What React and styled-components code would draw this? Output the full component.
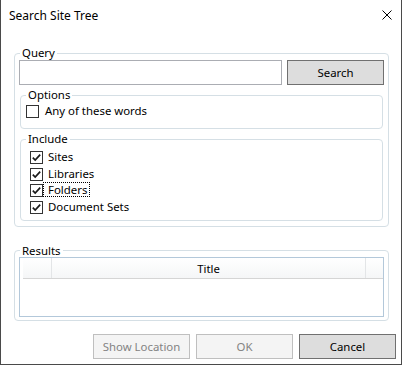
import React from "react";
import styled, { createGlobalStyle } from "styled-components";

const GlobalStyle = createGlobalStyle`
    html, body {
        margin: 0;
        background: #ffffff;
    }
    body {
        font-family: "Noto Sans", "Open Sans", sans-serif;
        font-size: 11.4px;
        color: #000;
    }
`;

// окно диалога
const Window = styled.div`
    width: 402px;
    height: 365px;
    box-sizing: border-box;
    border: 1px solid #4a4a4a;
    border-top: 0;
    background: #fff;
    display: flex;
    flex-direction: column;
`;

const TitleBar = styled.div`
    height: 30px;
    display: flex;
    align-items: center;
    justify-content: space-between;
    padding: 0 9px 0 8px;
    font-size: 12px;
`;

const Content = styled.div`
    padding: 16px 12px 0 13px;
    display: flex;
    flex-direction: column;
`;

// групбокс
const Group = styled.fieldset`
    margin: ${props => props.mt || 0}px ${props => props.mx || 0}px 0;
    padding: ${props => props.pt || 0}px 4px ${props => props.pb || 0}px 4px;
    border: 1px solid #d5dfe5;
    border-radius: 4px;
    min-width: 0;
`;

const Legend = styled.legend`
    padding: 0 2px;
    margin-left: 1px;
    line-height: 14px;
`;

const QueryRow = styled.div`
    display: flex;
    gap: 5px;
    height: 25px;
`;

const TextBox = styled.div`
    flex: 1;
    box-sizing: border-box;
    border: 1px solid #abadb3;
    background: #fff;
`;

const Button = styled.button`
    width: 97px;
    height: 25px;
    box-sizing: border-box;
    padding: 0;
    font-family: inherit;
    font-size: 11.4px;
    border: 1px solid ${props => props.disabled ? '#bfbfbf' : '#707070'};
    background: ${props => props.disabled ? '#f4f4f4' : '#dddddd'};
    color: ${props => props.disabled ? '#838383' : '#000'};
`;

const CheckRow = styled.div`
    display: flex;
    align-items: center;
    height: ${props => props.h || 17}px;
    padding-left: ${props => props.indent || 1}px;
`;

const Box = styled.div`
    width: 13px;
    height: 13px;
    box-sizing: border-box;
    border: 1px solid #333;
    background: #fff;
    display: flex;
    align-items: center;
    justify-content: center;
    flex-shrink: 0;
`;

const CheckLabel = styled.span`
    line-height: 13px;
    border: 1px dotted ${props => props.focused ? '#000' : 'transparent'};
    padding: 0 2px 0 ${props => props.pl || 4}px;
    margin-top: -2px;
`;

const ListView = styled.div`
    margin-top: -1px;
    height: 60px;
    box-sizing: border-box;
    border: 1px solid #b3c8da;
    padding-left: 3px;
    background: #fff;
`;

const Header = styled.div`
    display: flex;
    height: 21px;
    box-sizing: border-box;
    border-bottom: 1px solid #d5d5d5;
    background: linear-gradient(#ffffff, #f5f6f7);
`;

const HeaderCell = styled.div`
    width: ${props => props.w ? props.w + 'px' : 'auto'};
    flex: ${props => props.w ? 'none' : 1};
    box-sizing: border-box;
    border-right: ${props => props.last ? 'none' : '1px solid #e3e5e7'};
    display: flex;
    align-items: center;
    justify-content: center;
    padding-top: 1px;
`;

const Footer = styled.div`
    display: flex;
    justify-content: flex-end;
    gap: 6px;
    padding: 13px 5px 0 0;
`;

const CheckBox = ({checked, label, focused, indent, h, pl}) => (
    <CheckRow indent={indent} h={h}>
        <Box>
            {checked && (
                <svg width="11" height="11" viewBox="0 0 11 11">
                    <path d="M1.8 5.6 L4.2 8 L9.2 2.6" fill="none" stroke="#1a1a1a" strokeWidth="1.7" />
                </svg>
            )}
        </Box>
        <CheckLabel focused={focused} pl={pl}>{label}</CheckLabel>
    </CheckRow>
);

const includes = ['Sites', 'Libraries', 'Folders', 'Document Sets'];

const App = () => {
    return (
        <>
            <GlobalStyle />
            <Window>
                <TitleBar>
                    <span>Search Site Tree</span>
                    <svg width="10" height="10" viewBox="0 0 10 10">
                        <path d="M0.5 0.5 L9.5 9.5 M9.5 0.5 L0.5 9.5" stroke="#000" strokeWidth="1" />
                    </svg>
                </TitleBar>
                <Content>
                    <Group pb={5}>
                        <Legend>Query</Legend>
                        <QueryRow>
                            <TextBox />
                            <Button>Search</Button>
                        </QueryRow>
                        <Group mt={3} mx={1} pt={1} pb={8}>
                            <Legend>Options</Legend>
                            <CheckBox label="Any of these words" pl={5} />
                        </Group>
                        <Group mt={3} mx={1} pt={3} pb={4}>
                            <Legend>Include</Legend>
                            {includes.map(item => (
                                <CheckBox
                                    key={item}
                                    checked
                                    label={item}
                                    indent={5}
                                    h={16.7}
                                    focused={item === 'Folders'}
                                />
                            ))}
                        </Group>
                    </Group>
                    <Group mt={17} pb={3}>
                        <Legend>Results</Legend>
                        <ListView>
                            <Header>
                                <HeaderCell w={29} />
                                <HeaderCell w={314}>Title</HeaderCell>
                                <HeaderCell last />
                            </Header>
                        </ListView>
                    </Group>
                </Content>
                <Footer>
                    <Button disabled>Show Location</Button>
                    <Button disabled>OK</Button>
                    <Button>Cancel</Button>
                </Footer>
            </Window>
        </>
    );
};

export default App;
